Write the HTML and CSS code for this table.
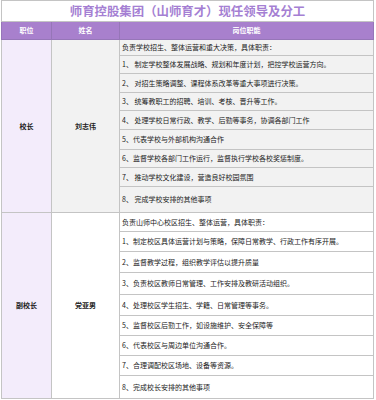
FILE: index.html
```html
<!DOCTYPE html>
<html lang="zh-CN">
<head>
<meta charset="utf-8">
<link rel="stylesheet" href="styles.css">
</head>
<body>
<div class="wrap">
<table class="sheet">
  <colgroup><col class="c1"><col class="c2"><col class="c3"></colgroup>
  <tr class="title-row"><td colspan="3" class="title">师育控股集团（山师育才）现任领导及分工</td></tr>
  <tr class="head-row"><th>职位</th><th>姓名</th><th>岗位职能</th></tr>

  <tr class="h16 g1"><td rowspan="9" class="pos">校长</td><td rowspan="9" class="name name-gray">刘志伟</td><td class="duty">负责学校招生、整体运营和重大决策，具体职责：</td></tr>
  <tr class="h18 g1"><td class="duty">1、 制定学校整体发展战略、规划和年度计划，把控学校运营方向。</td></tr>
  <tr class="h19 g1"><td class="duty">2、 对招生策略调整、课程体系改革等重大事项进行决策。</td></tr>
  <tr class="h18 g1"><td class="duty">3、 统筹教职工的招聘、培训、考核、晋升等工作。</td></tr>
  <tr class="h19 g1"><td class="duty">4、 处理学校日常行政、教学、后勤等事务，协调各部门工作</td></tr>
  <tr class="h20 g1"><td class="duty">5、代表学校与外部机构沟通合作</td></tr>
  <tr class="h18 g1"><td class="duty">6、监督学校各部门工作运行，监督执行学校各校奖惩制度。</td></tr>
  <tr class="h19 g1"><td class="duty">7、 推动学校文化建设，营造良好校园氛围</td></tr>
  <tr class="h26 g1"><td class="duty">8、 完成学校安排的其他事项</td></tr>

  <tr class="h19 g2"><td rowspan="9" class="pos">副校长</td><td rowspan="9" class="name">党亚男</td><td class="duty">负责山师中心校区招生、整体运营，具体职责：</td></tr>
  <tr class="h20 g2"><td class="duty">1、制定校区具体运营计划与策略，保障日常教学、行政工作有序开展。</td></tr>
  <tr class="h21 g2"><td class="duty">2、监督教学过程，组织教学评估以提升质量</td></tr>
  <tr class="h22 g2"><td class="duty">3、负责校区教师日常管理、工作安排及教研活动组织。</td></tr>
  <tr class="h21 g2"><td class="duty">4、处理校区学生招生、学籍、日常管理等事务。</td></tr>
  <tr class="h20 g2"><td class="duty">5、监督校区后勤工作，如设施维护、安全保障等</td></tr>
  <tr class="h20 g2"><td class="duty">6、代表校区与周边单位沟通合作。</td></tr>
  <tr class="h20 g2"><td class="duty">7、合理调配校区场地、设备等资源。</td></tr>
  <tr class="h23 g2"><td class="duty">8、完成校长安排的其他事项</td></tr>
</table>
</div>
</body>
</html>
```

FILE: styles.css
```css
html, body {
  margin: 0;
  padding: 0;
  background: #ffffff;
}
.wrap {
  padding-left: 1px;
}
.sheet {
  width: 372px;
  table-layout: fixed;
  border-collapse: collapse;
  font-family: "Noto Sans CJK SC", "Noto Sans", sans-serif;
  font-size: 7px;
  color: #222222;
}
.c1 { width: 50px; }
.c2 { width: 68px; }
.c3 { width: 254px; }
.sheet td, .sheet th {
  border: 1px solid #c4c4c4;
  padding: 0;
  line-height: 9px;
}
.title-row { height: 21px; }
.title {
  text-align: center;
  color: #a57fd3;
  font-weight: bold;
  font-size: 12.4px;
  line-height: 14px;
  background: #ffffff;
}
.head-row { height: 18px; }
.head-row th {
  background: #a880cd;
  color: #ffffff;
  font-weight: bold;
  font-size: 7px;
  border-color: #9676b8;
  text-align: center;
}
.pos {
  background: #f3ecfb;
  text-align: center;
  vertical-align: middle;
  font-weight: bold;
}
.name {
  text-align: center;
  vertical-align: middle;
  font-weight: bold;
  background: #ffffff;
}
.name-gray { background: #f2f2f2; }
.duty {
  padding-left: 2px !important;
  vertical-align: middle;
  white-space: nowrap;
  overflow: hidden;
}
.g1 .duty { background: #f2f2f2; }
.g2 .duty { background: #ffffff; }
.h16 { height: 16px; }
.h18 { height: 18px; }
.h19 { height: 19px; }
.h20 { height: 20px; }
.h21 { height: 21px; }
.h22 { height: 22px; }
.h23 { height: 23px; }
.h26 { height: 26px; }
```
